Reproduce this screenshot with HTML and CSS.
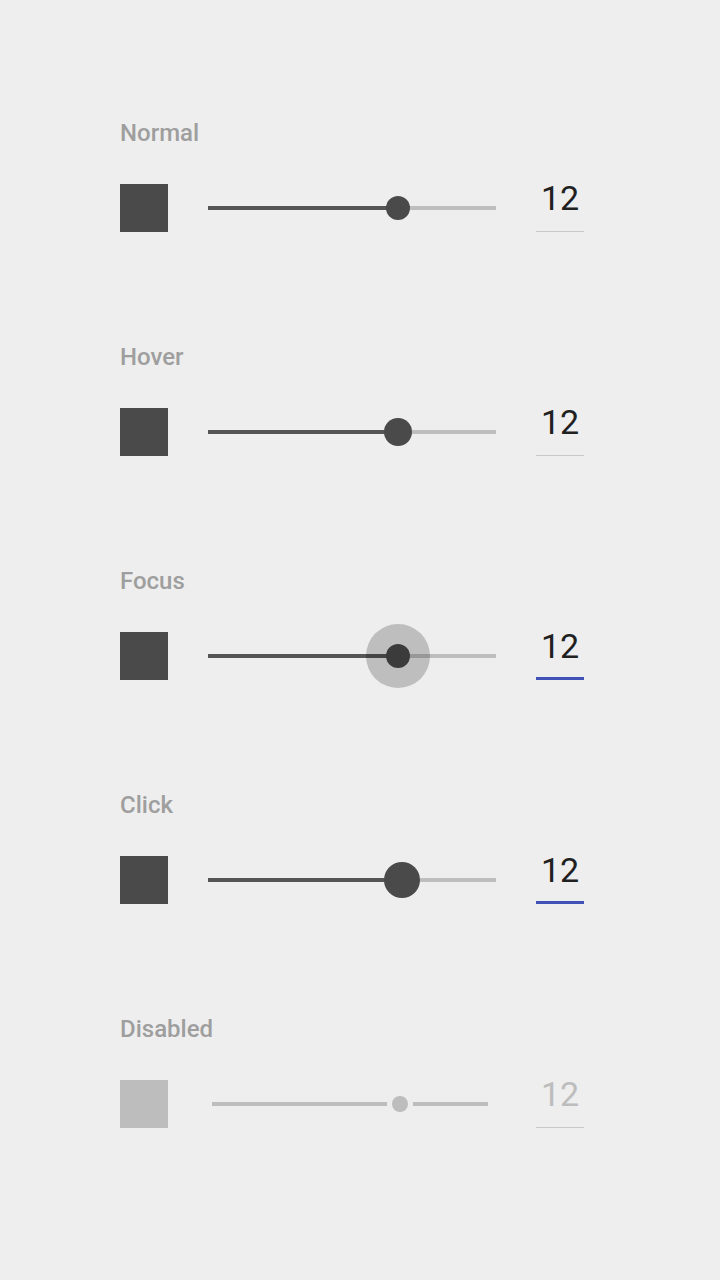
FILE: index.html
```html
<!DOCTYPE html>
<html lang="en">
<head>
    <meta charset="UTF-8">
    <meta name="viewport" content="width=device-width, initial-scale=1.0">
    <title>Slider States</title>
    <link rel="stylesheet" href="styles.css">
</head>
<body>

    <div class="page">

        <!-- Normal -->
        <div class="state">
            <div class="label">Normal</div>
            <div class="row">
                <div class="swatch"></div>
                <div class="slider" style="--value: 66%">
                    <div class="track"><div class="fill"></div></div>
                    <div class="thumb"></div>
                </div>
                <div class="field">12</div>
            </div>
        </div>

        <!-- Hover -->
        <div class="state hover">
            <div class="label">Hover</div>
            <div class="row">
                <div class="swatch"></div>
                <div class="slider" style="--value: 66%">
                    <div class="track"><div class="fill"></div></div>
                    <div class="thumb"></div>
                </div>
                <div class="field">12</div>
            </div>
        </div>

        <!-- Focus -->
        <div class="state focus">
            <div class="label">Focus</div>
            <div class="row">
                <div class="swatch"></div>
                <div class="slider" style="--value: 66%">
                    <div class="track"><div class="fill"></div></div>
                    <div class="thumb"></div>
                </div>
                <div class="field">12</div>
            </div>
        </div>

        <!-- Click -->
        <div class="state click">
            <div class="label">Click</div>
            <div class="row">
                <div class="swatch"></div>
                <div class="slider" style="--value: 67.4%">
                    <div class="track"><div class="fill"></div></div>
                    <div class="thumb"></div>
                </div>
                <div class="field">12</div>
            </div>
        </div>

        <!-- Disabled -->
        <div class="state disabled">
            <div class="label">Disabled</div>
            <div class="row">
                <div class="swatch"></div>
                <div class="slider" style="--value: 68%">
                    <div class="track"><div class="fill"></div></div>
                    <div class="thumb"></div>
                </div>
                <div class="field">12</div>
            </div>
        </div>

    </div>

</body>
</html>
```

FILE: styles.css
```css
* {
    margin: 0;
    padding: 0;
    box-sizing: border-box;
}
body {
    font-family: Roboto, "Liberation Sans", sans-serif;
    background-color: #eeeeee;
    height: 1280px;
}
.page {
    padding: 121px 136px 0 120px;
}
/* One block per state */
.state {
    margin-bottom: 113px;
}
.label {
    font-size: 24px;
    line-height: 24px;
    font-weight: 500;
    color: #9e9e9e;
    margin-bottom: 39px;
}
.row {
    display: flex;
    align-items: center;
    gap: 40px;
    height: 48px;
}
.swatch {
    width: 48px;
    height: 48px;
    background: #4a4a4a;
}
/* Slider */
.slider {
    flex: 1;
    position: relative;
    display: flex;
    align-items: center;
    height: 48px;
}
.track {
    flex: 1;
    height: 4px;
    background: #bdbdbd;
}
.fill {
    width: var(--value);
    height: 100%;
    background: #555555;
}
.thumb {
    position: absolute;
    left: var(--value);
    top: 50%;
    width: 24px;
    height: 24px;
    border-radius: 50%;
    background: #4a4a4a;
    transform: translate(-50%, -50%);
}
/* Number field */
.field {
    width: 48px;
    height: 48px;
    font-size: 34px;
    line-height: 28px;
    color: #212121;
    text-align: center;
    box-shadow: inset 0 -1px #c8c8c8;
}
/* States */
.hover .thumb {
    width: 28px;
    height: 28px;
}
.focus .thumb::before {
    content: "";
    position: absolute;
    left: 50%;
    top: 50%;
    width: 64px;
    height: 64px;
    border-radius: 50%;
    background: rgba(0, 0, 0, 0.2);
    transform: translate(-50%, -50%);
}
.focus .field,
.click .field {
    box-shadow: inset 0 -3px #3f51b5;
}
.click .thumb {
    width: 36px;
    height: 36px;
}
.disabled .swatch {
    background: #bdbdbd;
}
.disabled .slider {
    padding: 0 8px 0 4px;
}
.disabled .fill {
    background: #bdbdbd;
}
.disabled .thumb {
    left: calc(4px + (100% - 12px) * 0.68);
    width: 16px;
    height: 16px;
    background: #bdbdbd;
    box-shadow: 0 0 0 5px #eeeeee;
}
.disabled .field {
    color: #bdbdbd;
}
```
